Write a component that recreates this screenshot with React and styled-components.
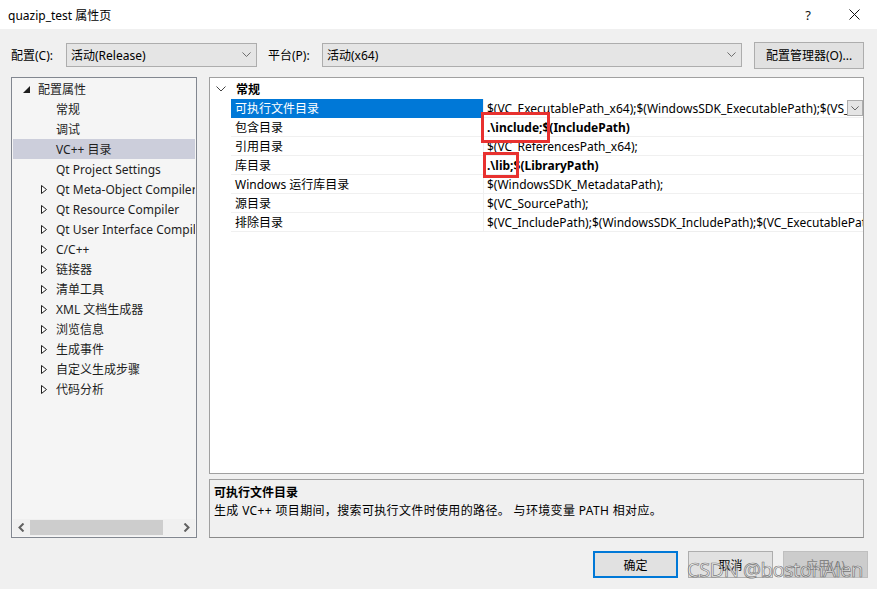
import React from 'react';
import styled, { createGlobalStyle } from 'styled-components';

const UI = `"Noto Sans", "Noto Sans CJK SC", sans-serif`;

const GlobalStyle = createGlobalStyle`
  html, body { margin: 0; padding: 0; }
  body {
    width: 877px; height: 589px; overflow: hidden;
    background: #f0f0f0;
    font-family: ${UI};
    font-size: 12px;
    color: #000;
  }
`;

const Window = styled.div`
  width: 877px; height: 589px;
  display: flex; flex-direction: column;
  background: #f0f0f0;
  position: relative;
  overflow: hidden;
`;

const TitleBar = styled.div`
  height: 29px; flex: none;
  background: #fff;
  display: flex; align-items: center;
  padding-left: 8px;
`;
const TitleText = styled.div`
  flex: 1; font-size: 12px; color: #000;
`;
const TitleButton = styled.div`
  width: ${p => p.$w}px; height: 29px;
  display: flex; align-items: center; justify-content: center;
  font-size: 13px; color: #111;
`;

const Toolbar = styled.div`
  margin-top: 14px; height: 24px; flex: none;
  display: flex; align-items: center;
  padding-left: 11px;
`;
const FieldLabel = styled.div`
  width: ${p => p.$w}px; flex: none; white-space: nowrap;
`;
const Combo = styled.div`
  width: ${p => p.$w}px; height: 24px; box-sizing: border-box; flex: none;
  background: #e5e5e5; border: 1px solid #adadad;
  display: flex; align-items: center;
  padding: 0 5px 0 4px;
  margin-right: ${p => p.$mr || 0}px;
`;
const ComboText = styled.div` flex: 1; white-space: nowrap; `;
const Button = styled.div`
  width: ${p => p.$w}px; height: 27px; box-sizing: border-box; flex: none;
  background: ${p => (p.$disabled ? '#cccccc' : '#e1e1e1')};
  border: ${p => (p.$primary ? '2px solid #0078d7' : `1px solid ${p.$disabled ? '#bfbfbf' : '#adadad'}`)};
  color: ${p => (p.$disabled ? '#838383' : '#000')};
  display: flex; align-items: center; justify-content: center;
  white-space: nowrap;
`;

const Main = styled.div`
  margin-top: 10px; height: 461px; flex: none;
  display: flex; gap: 12px;
  padding: 0 13px 0 11px;
`;

const TreePanel = styled.div`
  width: 186px; flex: none; box-sizing: border-box;
  border: 1px solid #828790;
  background: #f5f5f5;
  display: flex; flex-direction: column;
`;
const TreeList = styled.div`
  flex: 1; overflow: hidden; padding-top: 1px;
`;
const TreeRow = styled.div`
  height: 20px; margin: 0 1px;
  display: flex; align-items: center;
  padding-left: ${p => 8 + p.$level * 18}px;
  background: ${p => (p.$selected ? '#cccedb' : 'transparent')};
  white-space: nowrap; overflow: hidden;
  color: #1e1e1e;
`;
const Expander = styled.div`
  width: 10px; height: 10px; flex: none; margin-right: 7px;
  display: flex; align-items: center; justify-content: center;
`;
const HScroll = styled.div`
  height: 17px; flex: none; margin: 0 1px 1px;
  background: #f0f0f0;
  display: flex; align-items: center;
`;
const ScrollArrow = styled.div`
  width: 17px; height: 17px; flex: none;
  display: flex; align-items: center; justify-content: center;
`;
const ScrollTrack = styled.div`
  flex: 1; height: 15px; display: flex; align-items: center;
`;
const ScrollThumb = styled.div`
  width: 133px; height: 15px; background: #cdcdcd;
`;

const RightCol = styled.div`
  flex: 1; display: flex; flex-direction: column; gap: 5px;
`;
const Grid = styled.div`
  flex: 1; box-sizing: border-box;
  background: #fff; border: 1px solid #a0a0a0;
  position: relative; overflow: hidden;
`;
const CategoryRow = styled.div`
  height: 21px; display: flex; align-items: center;
  font-weight: bold;
`;
const CatChevron = styled.div`
  width: 21px; flex: none; display: flex; justify-content: center;
  margin-right: 5px;
`;
const PropRow = styled.div`
  height: 19px; box-sizing: border-box;
  display: grid; grid-template-columns: 21px 252px 1fr;
  white-space: nowrap;
`;
const Margin = styled.div` background: #fff; `;
const NameCell = styled.div`
  background: ${p => (p.$selected ? '#0078d7' : '#fff')};
  color: ${p => (p.$selected ? '#fff' : '#000')};
  border-bottom: 1px solid ${p => (p.$selected ? '#0078d7' : '#f0f0f0')};
  padding-left: 4px;
  display: flex; align-items: center; overflow: hidden;
`;
const ValueCell = styled.div`
  border-left: 1px solid #f0f0f0;
  border-bottom: 1px solid #f0f0f0;
  padding-left: 3px;
  display: flex; align-items: center; overflow: hidden;
  font-weight: ${p => (p.$bold ? 'bold' : 'normal')};
  position: relative;
`;
const ValueText = styled.div` flex: 1; overflow: hidden; `;
const DropBtn = styled.div`
  width: 16px; height: 16px; box-sizing: border-box; flex: none;
  background: #e5e5e5; border: 1px solid #adadad;
  display: flex; align-items: center; justify-content: center;
  margin-right: 0px;
`;
const Annot = styled.div`
  position: absolute;
  left: ${p => p.$l}px; top: ${p => p.$t}px;
  width: ${p => p.$w}px; height: ${p => p.$h}px;
  box-sizing: border-box;
  border: 3px solid #e8312f;
  pointer-events: none;
`;

const Desc = styled.div`
  height: 59px; flex: none; box-sizing: border-box;
  border: 1px solid #a0a0a0; border-bottom-color: #8a8a8a;
  background: #f0f0f0;
  padding: 4px 4px 2px;
  line-height: 18px;
`;
const DescTitle = styled.div` font-weight: bold; `;
const DescText = styled.div` white-space: nowrap; letter-spacing: 0.35px; `;

const ButtonRow = styled.div`
  margin-top: 13px; height: 27px; flex: none;
  display: flex; justify-content: flex-end; gap: 10px;
  padding-right: 9px;
`;

const Watermark = styled.div`
  position: absolute; left: 687px; top: 557px;
  font-family: "Noto Sans", sans-serif; font-size: 20px; line-height: 26px;
  color: rgba(255,255,255,0.55);
  -webkit-text-stroke: 0.7px rgba(80,80,80,0.75);
  letter-spacing: -0.5px;
  white-space: nowrap; pointer-events: none;
`;

const ChevronDown = ({ color = '#606060', size = 9 }) => (
  <svg width={size} height={size * 0.6} viewBox="0 0 10 6">
    <path d="M0.5 0.5 L5 5 L9.5 0.5" fill="none" stroke={color} strokeWidth="1" />
  </svg>
);

const TriOpen = () => (
  <svg width="7" height="7" viewBox="0 0 7 7"><path d="M7 0 L7 7 L0 7 Z" fill="#1e1e1e" /></svg>
);
const TriClosed = () => (
  <svg width="6" height="9" viewBox="0 0 6 9"><path d="M0.5 0.5 L5.5 4.5 L0.5 8.5 Z" fill="#fff" stroke="#1e1e1e" strokeWidth="1" /></svg>
);

const tree = [
  { label: '配置属性', level: 0, exp: 'open' },
  { label: '常规', level: 1 },
  { label: '调试', level: 1 },
  { label: 'VC++ 目录', level: 1, selected: true },
  { label: 'Qt Project Settings', level: 1 },
  { label: 'Qt Meta-Object Compiler', level: 1, exp: 'closed' },
  { label: 'Qt Resource Compiler', level: 1, exp: 'closed' },
  { label: 'Qt User Interface Compiler', level: 1, exp: 'closed' },
  { label: 'C/C++', level: 1, exp: 'closed' },
  { label: '链接器', level: 1, exp: 'closed' },
  { label: '清单工具', level: 1, exp: 'closed' },
  { label: 'XML 文档生成器', level: 1, exp: 'closed' },
  { label: '浏览信息', level: 1, exp: 'closed' },
  { label: '生成事件', level: 1, exp: 'closed' },
  { label: '自定义生成步骤', level: 1, exp: 'closed' },
  { label: '代码分析', level: 1, exp: 'closed' },
];

const props = [
  { name: '可执行文件目录', value: '$(VC_ExecutablePath_x64);$(WindowsSDK_ExecutablePath);$(VS_ExecutablePath);$(MSBuild_ExecutablePath)', selected: true },
  { name: '包含目录', value: '.\\include;$(IncludePath)', bold: true },
  { name: '引用目录', value: '$(VC_ReferencesPath_x64);' },
  { name: '库目录', value: '.\\lib;$(LibraryPath)', bold: true },
  { name: 'Windows 运行库目录', value: '$(WindowsSDK_MetadataPath);' },
  { name: '源目录', value: '$(VC_SourcePath);' },
  { name: '排除目录', value: '$(VC_IncludePath);$(WindowsSDK_IncludePath);$(VC_ExecutablePath_x64);' },
];

export default function App() {
  return (
    <>
      <GlobalStyle />
      <Window>
        <TitleBar>
          <TitleText>quazip_test 属性页</TitleText>
          <TitleButton $w={46}>?</TitleButton>
          <TitleButton $w={46}>
            <svg width="11" height="11" viewBox="0 0 11 11">
              <path d="M0.5 0.5 L10.5 10.5 M10.5 0.5 L0.5 10.5" stroke="#111" strokeWidth="1" />
            </svg>
          </TitleButton>
        </TitleBar>

        <Toolbar>
          <FieldLabel $w={55}>配置(C):</FieldLabel>
          <Combo $w={191} $mr={11}>
            <ComboText>活动(Release)</ComboText>
            <ChevronDown />
          </Combo>
          <FieldLabel $w={54}>平台(P):</FieldLabel>
          <Combo $w={420} $mr={12}>
            <ComboText>活动(x64)</ComboText>
            <ChevronDown />
          </Combo>
          <Button $w={110}>配置管理器(O)...</Button>
        </Toolbar>

        <Main>
          <TreePanel>
            <TreeList>
              {tree.map((t, i) => (
                <TreeRow key={i} $level={t.level} $selected={t.selected}>
                  <Expander>
                    {t.exp === 'open' && <TriOpen />}
                    {t.exp === 'closed' && <TriClosed />}
                  </Expander>
                  {t.label}
                </TreeRow>
              ))}
            </TreeList>
            <HScroll>
              <ScrollArrow>
                <svg width="7" height="9" viewBox="0 0 7 9"><path d="M5.5 0.5 L1.5 4.5 L5.5 8.5" fill="none" stroke="#606060" strokeWidth="2" /></svg>
              </ScrollArrow>
              <ScrollTrack><ScrollThumb /></ScrollTrack>
              <ScrollArrow>
                <svg width="7" height="9" viewBox="0 0 7 9"><path d="M1.5 0.5 L5.5 4.5 L1.5 8.5" fill="none" stroke="#606060" strokeWidth="2" /></svg>
              </ScrollArrow>
            </HScroll>
          </TreePanel>

          <RightCol>
            <Grid>
              <CategoryRow>
                <CatChevron><ChevronDown color="#444" size={10} /></CatChevron>
                常规
              </CategoryRow>
              {props.map((p, i) => (
                <PropRow key={i}>
                  <Margin />
                  <NameCell $selected={p.selected}>{p.name}</NameCell>
                  <ValueCell $bold={p.bold}>
                    <ValueText>{p.value}</ValueText>
                    {p.selected && (
                      <DropBtn><ChevronDown color="#444" size={8} /></DropBtn>
                    )}
                  </ValueCell>
                </PropRow>
              ))}
              <Annot $l={271} $t={34} $w={69} $h={31} />
              <Annot $l={273} $t={74} $w={36} $h={26} />
            </Grid>
            <Desc>
              <DescTitle>可执行文件目录</DescTitle>
              <DescText>生成 VC++ 项目期间，搜索可执行文件时使用的路径。 与环境变量 PATH 相对应。</DescText>
            </Desc>
          </RightCol>
        </Main>

        <ButtonRow>
          <Button $w={85} $primary>确定</Button>
          <Button $w={85}>取消</Button>
          <Button $w={85} $disabled>应用(A)</Button>
        </ButtonRow>

        <Watermark>CSDN @bostonAlen</Watermark>
      </Window>
    </>
  );
}
